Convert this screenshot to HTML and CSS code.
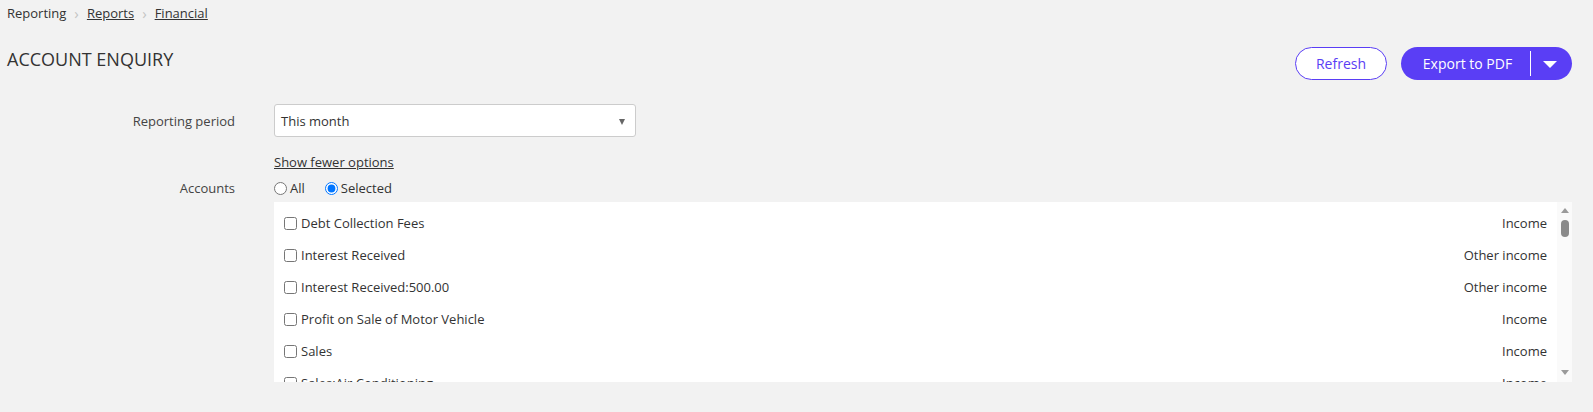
FILE: index.html
```html
<!DOCTYPE html>
<html lang="en">
<head>
    <meta charset="UTF-8">
    <meta name="viewport" content="width=device-width, initial-scale=1.0">
    <title>Account Enquiry</title>
    <link rel="stylesheet" href="styles.css">
</head>
<body>
    <nav class="breadcrumb">
        <span>Reporting</span>
        <span class="sep">&#8250;</span>
        <a href="#">Reports</a>
        <span class="sep">&#8250;</span>
        <a href="#">Financial</a>
    </nav>

    <div class="page-header">
        <h1>ACCOUNT ENQUIRY</h1>
        <div class="actions">
            <button class="btn-outline">Refresh</button>
            <div class="split-btn">
                <button class="split-main">Export to PDF</button>
                <button class="split-toggle"><span class="caret"></span></button>
            </div>
        </div>
    </div>

    <form class="filters">
        <label class="field-label">Reporting period</label>
        <div class="select">
            <span>This month</span>
            <span class="select-arrow"></span>
        </div>

        <span></span>
        <a href="#" class="toggle-link">Show fewer options</a>

        <label class="field-label field-label-radios">Accounts</label>
        <div class="radios">
            <label class="radio"><input type="radio" name="accounts"> All</label>
            <label class="radio"><input type="radio" name="accounts" checked> Selected</label>
        </div>

        <span></span>
        <div class="account-list">
            <div class="account-rows">
                <label class="account-row"><span class="name"><input type="checkbox"> Debt Collection Fees</span><span class="type">Income</span></label>
                <label class="account-row"><span class="name"><input type="checkbox"> Interest Received</span><span class="type">Other income</span></label>
                <label class="account-row"><span class="name"><input type="checkbox"> Interest Received:500.00</span><span class="type">Other income</span></label>
                <label class="account-row"><span class="name"><input type="checkbox"> Profit on Sale of Motor Vehicle</span><span class="type">Income</span></label>
                <label class="account-row"><span class="name"><input type="checkbox"> Sales</span><span class="type">Income</span></label>
                <label class="account-row"><span class="name"><input type="checkbox"> Sales:Air Conditioning</span><span class="type">Income</span></label>
                <label class="account-row"><span class="name"><input type="checkbox"> Sales:Electrical</span><span class="type">Income</span></label>
                <label class="account-row"><span class="name"><input type="checkbox"> Sales:Plumbing</span><span class="type">Income</span></label>
            </div>
            <div class="scrollbar">
                <span class="arrow-up"></span>
                <span class="thumb"></span>
                <span class="arrow-down"></span>
            </div>
        </div>
    </form>
</body>
</html>
```

FILE: styles.css
```css
body {
    font-family: 'Open Sans', 'Liberation Sans', sans-serif;
    font-size: 13px;
    color: #333;
    margin: 0;
    padding: 4px 21px 0 7px;
    background-color: #f2f2f2;
}

a {
    color: #333;
}

.breadcrumb {
    display: flex;
    align-items: center;
    gap: 8px;
    height: 18px;
}

.breadcrumb .sep {
    color: #c4c4c4;
    font-size: 15px;
}

.page-header {
    display: flex;
    justify-content: space-between;
    align-items: flex-start;
    margin-top: 25px;
}

h1 {
    font-size: 18px;
    font-weight: normal;
    margin: 0;
    color: #333;
}

.actions {
    display: flex;
    gap: 14px;
}

button {
    font-family: inherit;
    font-size: 14px;
    cursor: pointer;
}

.btn-outline {
    background: white;
    color: #5a3ef5;
    border: 1px solid #5a3ef5;
    border-radius: 17px;
    height: 33px;
    width: 92px;
}

.split-btn {
    display: flex;
    background-color: #5a3ef5;
    border-radius: 17px;
    height: 33px;
    overflow: hidden;
}

.split-main,
.split-toggle {
    background: none;
    border: none;
    color: white;
    height: 33px;
}

.split-main {
    width: 130px;
    padding: 0 0 0 4px;
    border-right: 1px solid white;
    height: 25px;
    margin-top: 4px;
}

.split-toggle {
    width: 41px;
    display: flex;
    align-items: center;
    justify-content: center;
    padding: 0 4px 0 0;
}

.caret {
    width: 0;
    height: 0;
    border-left: 7px solid transparent;
    border-right: 7px solid transparent;
    border-top: 7px solid white;
    margin-top: 2px;
}

.filters {
    display: grid;
    grid-template-columns: 228px 1fr;
    column-gap: 39px;
    align-items: center;
    margin-top: 24px;
}

.field-label {
    text-align: right;
    color: #444;
}

.field-label-radios {
    margin-top: 6px;
}

.select {
    width: 344px;
    height: 31px;
    background: white;
    border: 1px solid #ccc;
    border-radius: 3px;
    display: flex;
    align-items: center;
    justify-content: space-between;
    padding: 0 10px 0 6px;
}

.select-arrow {
    width: 0;
    height: 0;
    border-left: 3px solid transparent;
    border-right: 3px solid transparent;
    border-top: 6px solid #666;
    margin-top: 2px;
}

.toggle-link {
    margin-top: 15px;
    line-height: 20px;
}

.radios {
    display: flex;
    gap: 20px;
    margin-top: 6px;
    line-height: 20px;
}

.radio {
    display: flex;
    align-items: center;
    gap: 3px;
}

.radio input {
    margin: 0;
    width: 13px;
    height: 13px;
}

.account-list {
    margin-top: 4px;
    background: white;
    height: 180px;
    display: flex;
    overflow: hidden;
}

.account-rows {
    flex: 1;
    padding-top: 5px;
    overflow: hidden;
}

.account-row {
    display: flex;
    justify-content: space-between;
    align-items: center;
    height: 32px;
    padding: 0 10px 0 10px;
}

.account-row .name {
    display: flex;
    align-items: center;
    gap: 4px;
}

.account-row input {
    margin: 0;
    width: 13px;
    height: 13px;
}

.scrollbar {
    width: 15px;
    background: #fafafa;
    display: flex;
    flex-direction: column;
    align-items: center;
    padding: 6px 0 7px;
    box-sizing: border-box;
}

.arrow-up,
.arrow-down {
    width: 0;
    height: 0;
    border-left: 4px solid transparent;
    border-right: 4px solid transparent;
}

.arrow-up {
    border-bottom: 5px solid #9a9a9a;
}

.arrow-down {
    border-top: 5px solid #9a9a9a;
    margin-top: auto;
}

.thumb {
    width: 8px;
    height: 17px;
    margin-top: 7px;
    border-radius: 4px;
    background: #8a8a8a;
}
```
